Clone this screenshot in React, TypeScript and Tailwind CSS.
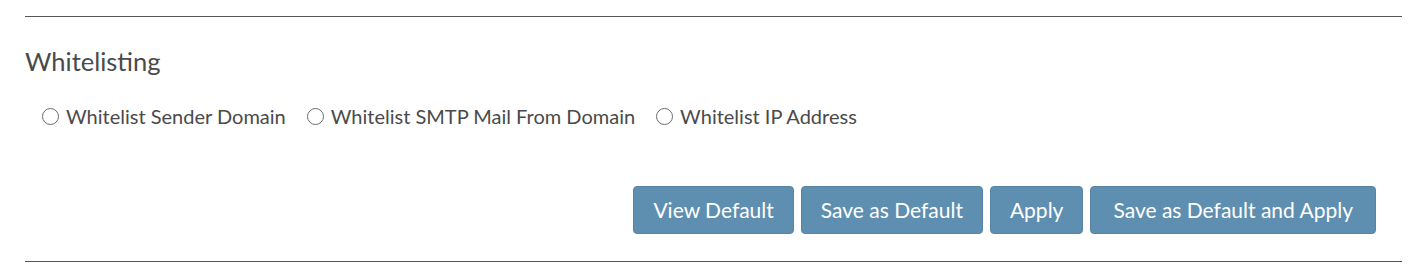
import { useState } from "react";

const options = [
  "Whitelist Sender Domain",
  "Whitelist SMTP Mail From Domain",
  "Whitelist IP Address",
];

const buttons = ["View Default", "Save as Default", "Apply", "Save as Default and Apply"];

const App = () => {
  const [selected, setSelected] = useState<string>();

  return (
    <div className="w-[1419px] h-[273px] bg-white font-['Lato',sans-serif] text-[#4a4a4a]">
      <div className="pt-[16px] pl-[25px] pr-[17px]">
        <div className="border-t border-[#555]" />
        <h2 className="mt-[29px] text-[25.5px] leading-[30px]">Whitelisting</h2>
        <div className="mt-[28px] pl-[17px] flex items-center gap-[21px]">
          {options.map((o) => (
            <label key={o} className="flex items-center gap-[7px] text-[20px] leading-[24px] cursor-pointer">
              <input
                type="radio"
                name="whitelist"
                checked={selected === o}
                onChange={() => setSelected(o)}
                className="appearance-none w-[17px] h-[17px] rounded-full border border-[#6b6b6b] bg-white checked:border-[5px] checked:border-[#5f8fb0]"
              />
              {o}
            </label>
          ))}
        </div>
        <div className="mt-[58px] pr-[26px] flex justify-end gap-[7px]">
          {buttons.map((b, i) => (
            <button
              key={b}
              className={
                i === 3
                  ? "h-[48px] px-[22px] rounded-[4px] bg-[#5f8fb0] border border-[#5684a5] text-white text-[21px]"
                  : "h-[48px] px-[19px] rounded-[4px] bg-[#5f8fb0] border border-[#5684a5] text-white text-[21px]"
              }
            >
              {b}
            </button>
          ))}
        </div>
        <div className="mt-[27px] border-t border-[#555]" />
      </div>
    </div>
  );
};

export default App;
